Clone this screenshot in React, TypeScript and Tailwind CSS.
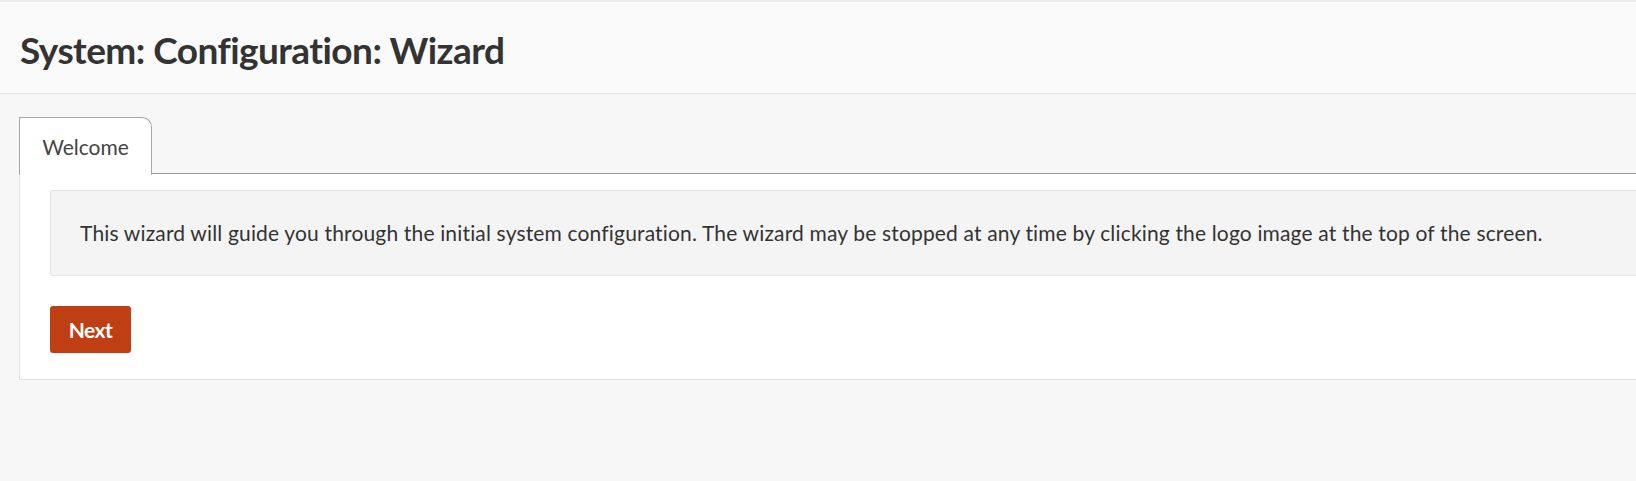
import React from "react";

export default function App() {
  return (
    <div className="min-h-[481px] w-full overflow-hidden bg-[#f7f7f7] font-['Lato',sans-serif] text-[#333]">
      <div className="h-[94px] border-t-2 border-b border-t-[#ececec] border-b-[#e6e6e6] bg-[#fafafa] flex items-center pl-[20px]">
        <h1 className="text-[37px] font-bold leading-none tracking-[-0.55px] text-[#333] mt-[4px]">
          System: Configuration: Wizard
        </h1>
      </div>

      <div className="pl-[19px] pt-[23px]">
        <div className="flex items-end">
          <div className="h-[58px] w-[133px] border border-b-0 border-[#a8a8a8] rounded-tr-[10px] bg-white flex items-center justify-center text-[21px] text-[#444] -mb-px relative z-10">
            Welcome
          </div>
          <div className="flex-1 border-b border-[#999]" />
        </div>

        <div className="bg-white border-l border-b border-[#e2e2e2] pt-[16px] pb-[26px] pl-[30px]">
          <div className="h-[86px] bg-[#f4f4f4] border border-r-0 border-[#e3e3e3] rounded-l-[3px] flex items-center pl-[29px] text-[21px] tracking-[0.16px] text-[#333]">
            This wizard will guide you through the initial system configuration. The wizard may be stopped at any time by clicking the logo image at the top of the screen.
          </div>
          <button className="mt-[30px] h-[47px] w-[81px] rounded-[3px] bg-[#c03e14] text-white text-[21px] font-bold tracking-[-0.6px]">
            Next
          </button>
        </div>
      </div>
    </div>
  );
}
